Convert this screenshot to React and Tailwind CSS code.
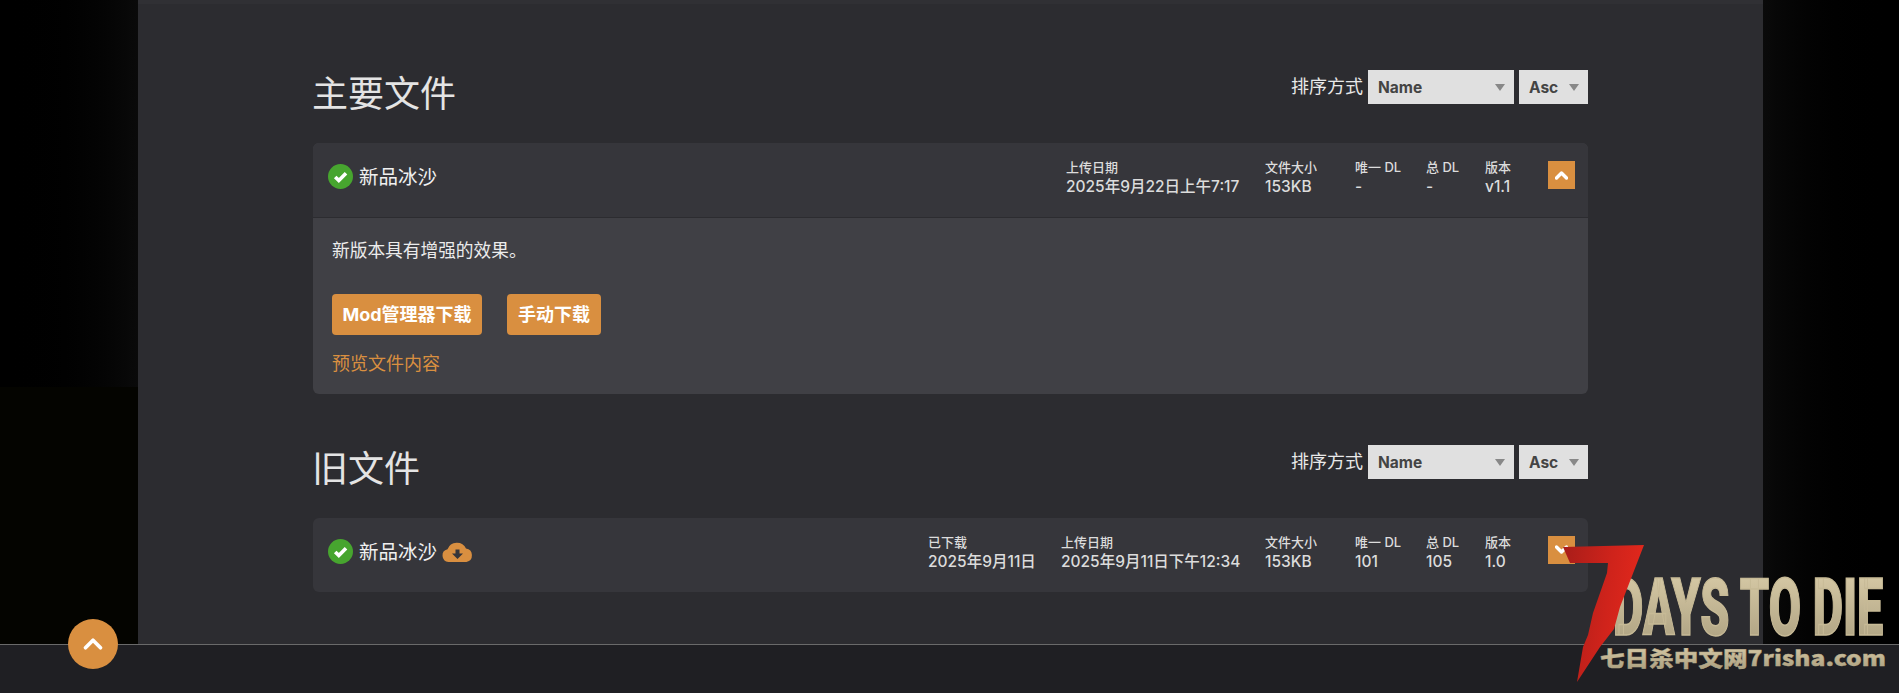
import React from "react";
import { ChevronUp } from "lucide-react";

const FONT = "font-['Inter','Noto_Sans_CJK_SC',sans-serif]";

function Select({ label, w }) {
  return (
    <div className={`${w} h-[34px] bg-[#e0e0e0] flex items-center justify-between pl-[10px] pr-[9px]`}>
      <span className="pt-[2px] text-[15.5px] font-bold text-[#444444] leading-none">{label}</span>
      <span className="w-0 h-0 border-l-[5px] border-r-[5px] border-t-[7px] border-l-transparent border-r-transparent border-t-[#888888]" />
    </div>
  );
}

function SectionHead({ title }) {
  return (
    <div className="flex items-center justify-between h-[34px]">
      <h2 className="-ml-px mt-[13px] text-[36px] leading-none font-normal text-[#e4e4e4] whitespace-nowrap">{title}</h2>
      <div className="flex items-center">
        <span className="text-[18px] leading-none text-[#e8e8e8] mr-[5px] whitespace-nowrap">排序方式</span>
        <Select label="Name" w="w-[146px]" />
        <div className="w-[5px]" />
        <Select label="Asc" w="w-[69px]" />
      </div>
    </div>
  );
}

function Stat({ label, value, w }) {
  return (
    <div className={`${w} shrink-0 whitespace-nowrap`}>
      <div className="text-[13px] leading-[19px] font-medium text-[#dcdcdc]">{label}</div>
      <div className="text-[15.5px] leading-[19px] font-medium text-[#dcdcdc]">{value}</div>
    </div>
  );
}

function Status() {
  return (
    <svg className="shrink-0" width="25" height="25" viewBox="0 0 25 25">
      <circle cx="12.5" cy="12.5" r="12.5" fill="#47a52f" />
      <path d="M7.2 13 L10.8 16.4 L18 9.2" fill="none" stroke="#ffffff" strokeWidth="3.6" />
    </svg>
  );
}

function Cloud() {
  return (
    <svg className="ml-[5px] shrink-0" width="31" height="21" viewBox="0 0 31 21">
      <path d="M6.5 21 A6.5 6.5 0 0 1 5.5 8.2 A10 10 0 0 1 24 7.6 A6.8 6.8 0 0 1 24.5 21 Z" fill="#d98f40" />
      <path d="M13.5 8.5 H17.5 V12.5 H21 L15.5 18 L10 12.5 H13.5 Z" fill="#35353a" />
    </svg>
  );
}

function Chevron({ up }) {
  return (
    <svg width="13" height="10" viewBox="0 0 13 10">
      <path
        d={up ? "M1.5 8 L6.5 3 L11.5 8" : "M1.5 2 L6.5 7 L11.5 2"}
        fill="none"
        stroke="#ffffff"
        strokeWidth="3.4"
        strokeLinecap="round"
        strokeLinejoin="round"
      />
    </svg>
  );
}

function FileHeader({ cloud, open, stats }) {
  return (
    <div className="flex items-center pl-[15px] pr-[13px] pb-[7px] h-full">
      <Status />
      <span className="ml-[6px] mt-[2px] text-[19.5px] leading-none text-[#f0f0f0] whitespace-nowrap">新品冰沙</span>
      {cloud && <Cloud />}
      <div className="ml-auto mr-px flex items-center">
        {stats.map((s) => (
          <Stat key={s.label} {...s} />
        ))}
      </div>
      <button className="-mt-[4px] w-[27px] h-[28px] bg-[#d98f40] flex items-center justify-center">
        <Chevron up={open} />
      </button>
    </div>
  );
}

function Logo() {
  return (
    <svg className="absolute left-[1550px] top-[535px]" width="349" height="158" viewBox="0 0 349 158">
      <defs>
        <linearGradient id="beige" x1="0" y1="0" x2="0" y2="1">
          <stop offset="0" stopColor="#ddd0ac" />
          <stop offset="1" stopColor="#a89c7c" />
        </linearGradient>
        <linearGradient id="red" x1="0" y1="0" x2="1" y2="0.2">
          <stop offset="0" stopColor="#a81d19" />
          <stop offset="0.6" stopColor="#cf231b" />
          <stop offset="1" stopColor="#e2281c" />
        </linearGradient>
      </defs>
      <text transform="translate(63 100) scale(0.585 1)" fontFamily="Roboto, sans-serif" fontWeight="900" fontSize="80" fill="url(#beige)" stroke="#c7ba96" strokeWidth="1.5">DAYS TO DIE</text>
      <text x="50" y="131" textLength="286" lengthAdjust="spacingAndGlyphs" fontFamily="'Noto Sans CJK SC', sans-serif" fontWeight="900" fontSize="21" fill="url(#beige)" stroke="#b5a98a" strokeWidth="0.4">七日杀中文网7risha.com</text>
      <path d="M13 12 L94 10 L70 72 L64 94 L50 112 L27 147 L33 112 L38 100 L43 78 L57 38 L58 28 L20 28 Z" fill="url(#red)" />
    </svg>
  );
}

export default function App() {
  return (
    <div className={`relative w-full h-[693px] overflow-hidden flex flex-col bg-black ${FONT}`}>
      <div className="flex flex-1 min-h-0">
        <div className="w-[138px] shrink-0 flex flex-col bg-gradient-to-r from-black to-[#0a0a0a]">
          <div className="h-[387px]" />
          <div className="flex-1 bg-[#040400]" />
        </div>
        <main className="w-[1625px] shrink-0 bg-[#2c2c30] border-t-[4px] border-[#303034] px-[175px] pt-[66px]">
          <SectionHead title="主要文件" />
          <section className="mt-[39px] rounded-md overflow-hidden bg-[#404045]">
            <div className="h-[75px] bg-[#36363b] border-b border-[#2c2c30]">
              <FileHeader
                open
                stats={[
                  { label: "上传日期", value: "2025年9月22日上午7:17", w: "w-[199px]" },
                  { label: "文件大小", value: "153KB", w: "w-[90px]" },
                  { label: "唯一 DL", value: "-", w: "w-[71px]" },
                  { label: "总 DL", value: "-", w: "w-[59px]" },
                  { label: "版本", value: "v1.1", w: "w-[62px]" },
                ]}
              />
            </div>
            <div className="h-[176px] pl-[19px] pt-[23px]">
              <p className="text-[17.7px] leading-[20px] text-[#ececec]">新版本具有增强的效果。</p>
              <div className="flex gap-[25px] mt-[33px]">
                <button className="w-[150px] h-[41px] rounded bg-[#d98f40] text-white text-[18px] font-bold">Mod管理器下载</button>
                <button className="w-[94px] h-[41px] rounded bg-[#d98f40] text-white text-[18px] font-bold">手动下载</button>
              </div>
              <a className="block mt-[19px] text-[18px] leading-[20px] text-[#d98f40]">预览文件内容</a>
            </div>
          </section>

          <div className="mt-[51px]">
            <SectionHead title="旧文件" />
          </div>
          <section className="mt-[39px] h-[74px] rounded-md bg-[#36363b]">
            <FileHeader
              cloud
              stats={[
                { label: "已下载", value: "2025年9月11日", w: "w-[133px]" },
                { label: "上传日期", value: "2025年9月11日下午12:34", w: "w-[204px]" },
                { label: "文件大小", value: "153KB", w: "w-[90px]" },
                { label: "唯一 DL", value: "101", w: "w-[71px]" },
                { label: "总 DL", value: "105", w: "w-[59px]" },
                { label: "版本", value: "1.0", w: "w-[62px]" },
              ]}
            />
          </section>
        </main>
        <div className="flex-1 bg-gradient-to-l from-black to-[#0a0a0a]" />
      </div>
      <footer className="h-[49px] shrink-0 bg-[#1f1f23] border-t border-[#6a6a6a]" />
      <button className="absolute left-[68px] top-[619px] w-[50px] h-[50px] rounded-full bg-[#d98f40] flex items-center justify-center text-white">
        <ChevronUp size={30} strokeWidth={3} />
      </button>
      <Logo />
    </div>
  );
}
